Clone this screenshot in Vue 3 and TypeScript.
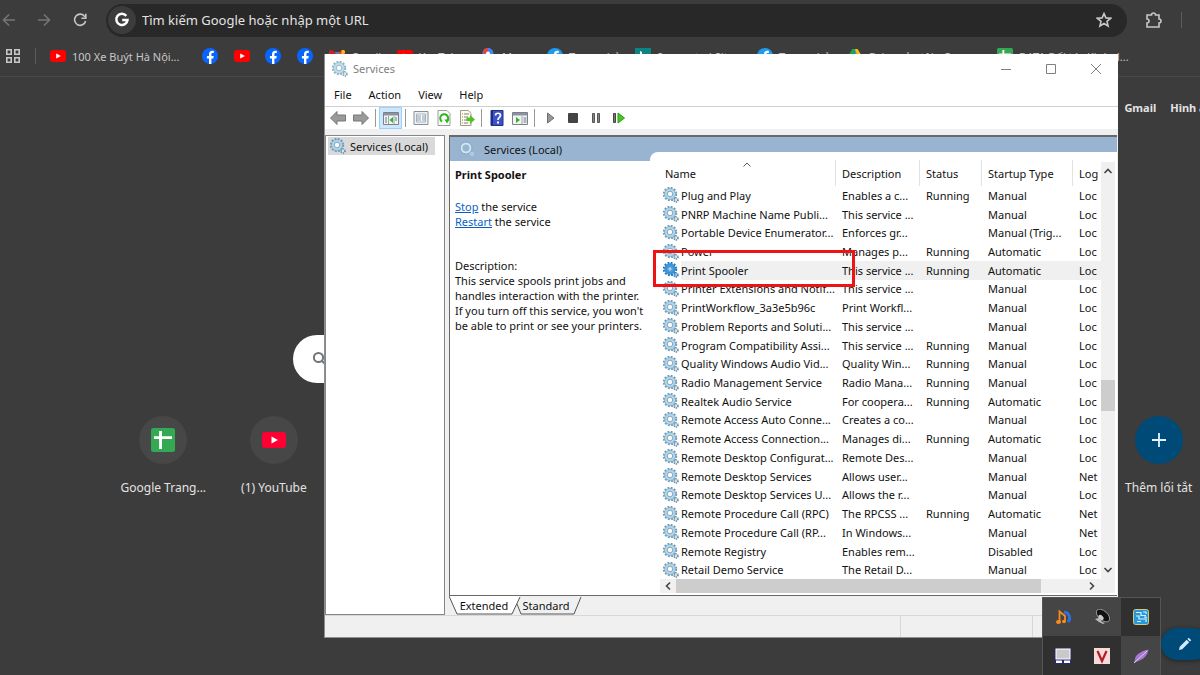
<script setup lang="ts">
interface Service {
  name: string
  desc: string
  status: string
  startup: string
  log: string
}

type Row = [string, string, string, string, string]

const rows: Row[] = [
  ['Plug and Play', 'Enables a c...', 'Running', 'Manual', 'Loc'],
  ['PNRP Machine Name Publi...', 'This service ...', '', 'Manual', 'Loc'],
  ['Portable Device Enumerator...', 'Enforces gr...', '', 'Manual (Trig...', 'Loc'],
  ['Power', 'Manages p...', 'Running', 'Automatic', 'Loc'],
  ['Print Spooler', 'This service ...', 'Running', 'Automatic', 'Loc'],
  ['Printer Extensions and Notif...', 'This service ...', '', 'Manual', 'Loc'],
  ['PrintWorkflow_3a3e5b96c', 'Print Workfl...', '', 'Manual', 'Loc'],
  ['Problem Reports and Soluti...', 'This service ...', '', 'Manual', 'Loc'],
  ['Program Compatibility Assi...', 'This service ...', 'Running', 'Manual', 'Loc'],
  ['Quality Windows Audio Vid...', 'Quality Win...', 'Running', 'Manual', 'Loc'],
  ['Radio Management Service', 'Radio Mana...', 'Running', 'Manual', 'Loc'],
  ['Realtek Audio Service', 'For coopera...', 'Running', 'Automatic', 'Loc'],
  ['Remote Access Auto Conne...', 'Creates a co...', '', 'Manual', 'Loc'],
  ['Remote Access Connection...', 'Manages di...', 'Running', 'Automatic', 'Loc'],
  ['Remote Desktop Configurat...', 'Remote Des...', '', 'Manual', 'Loc'],
  ['Remote Desktop Services', 'Allows user...', '', 'Manual', 'Net'],
  ['Remote Desktop Services U...', 'Allows the r...', '', 'Manual', 'Loc'],
  ['Remote Procedure Call (RPC)', 'The RPCSS ...', 'Running', 'Automatic', 'Net'],
  ['Remote Procedure Call (RP...', 'In Windows...', '', 'Manual', 'Net'],
  ['Remote Registry', 'Enables rem...', '', 'Disabled', 'Loc'],
  ['Retail Demo Service', 'The Retail D...', '', 'Manual', 'Loc'],
]

const services: Service[] = rows.map(([name, desc, status, startup, log]) => ({ name, desc, status, startup, log }))
const selected = 'Print Spooler'
const columns = ['Name', 'Description', 'Status', 'Startup Type', 'Log']
const menus = ['File', 'Action', 'View', 'Help']

interface Bookmark {
  icon: string
  label: string
}

const bookmarks: Bookmark[] = [
  { icon: 'i-yt', label: '100 Xe Buýt Hà Nội...' },
  { icon: 'i-fb', label: '' },
  { icon: 'i-yt', label: '' },
  { icon: 'i-fb', label: '' },
  { icon: 'i-fb', label: '' },
  { icon: 'i-gmail', label: 'Gmail' },
  { icon: 'i-yt', label: 'YouTube' },
  { icon: 'i-maps', label: 'Maps' },
  { icon: 'i-fb2', label: 'Trang chủ' },
  { icon: 'i-bing', label: 'Suggested Sites' },
  { icon: 'i-fb2', label: 'Trang chủ' },
  { icon: 'i-drive', label: 'Drive của tôi - Go...' },
  { icon: 'i-sheet', label: 'DATA Đối tác Kinh d...' },
]
</script>

<template>
  <div class="desktop">
    <svg class="defs" aria-hidden="true">
      <symbol id="i-gear" viewBox="0 0 16 16">
        <circle cx="7" cy="7" r="6" fill="none" stroke="#6f9ab5" stroke-width="2.4" stroke-dasharray="1.8 1.34" />
        <circle cx="7" cy="7" r="4.3" fill="#fff" stroke="#b3d7ea" stroke-width="2.4" />
        <circle cx="7" cy="7" r="5.5" fill="none" stroke="#78a5c0" stroke-width=".7" />
        <circle cx="7" cy="7" r="2.8" fill="#f8fcfe" stroke="#648ca6" stroke-width=".8" />
        <circle cx="13" cy="13" r="2" fill="#d3e5ef" stroke="#5c86a0" stroke-width="1.6" stroke-dasharray="1.1 .9" />
      </symbol>
      <symbol id="i-gear-on" viewBox="0 0 16 16">
        <circle cx="7" cy="7" r="6" fill="none" stroke="#1f6fb0" stroke-width="2.4" stroke-dasharray="1.8 1.34" />
        <circle cx="7" cy="7" r="4.2" fill="#9fcdf0" stroke="#3a94d8" stroke-width="3" />
        <circle cx="7" cy="7" r="2.3" fill="#a9d3f2" stroke="#2a7dc0" stroke-width=".8" />
        <circle cx="13" cy="13" r="2" fill="#8cc0ea" stroke="#2f7fbd" stroke-width="1.6" stroke-dasharray="1.1 .9" />
      </symbol>
      <symbol id="i-yt" viewBox="0 0 16 16">
        <rect x="0" y="2" width="16" height="12" rx="3" fill="#f00" />
        <path d="M6.2 5.4 11 8l-4.800 2.600z" fill="#fff" />
      </symbol>
      <symbol id="i-fb" viewBox="0 0 16 16">
        <circle cx="8" cy="8" r="8" fill="#0866ff" />
        <path d="M7 16v-5.600H4.900V7.900H7V6.300c0-2.300 1.200-3.500 3.300-3.500.6 0 1.100 0 1.500.1v2.200h-1.100c-1 0-1.300.5-1.300 1.400v1.400h2.300l-.4 2.500H9.400V16z" fill="#fff" />
      </symbol>
      <symbol id="i-fb2" viewBox="0 0 16 16">
        <circle cx="8" cy="8" r="8" fill="#1d9bf0" />
        <path d="M7 16v-5.600H4.900V7.900H7V6.300c0-2.300 1.200-3.500 3.300-3.500.6 0 1.100 0 1.500.1v2.200h-1.100c-1 0-1.300.5-1.300 1.400v1.400h2.300l-.4 2.500H9.400V16z" fill="#fff" />
      </symbol>
      <symbol id="i-gmail" viewBox="0 0 16 16">
        <path d="M0 4v10h3.500V7.500L8 11l4.500-3.500V14H16V4z" fill="#4285f4" />
        <path d="M0 4c0-2 2-2.500 3.500-1.500L8 6v5L0 5z" fill="#c5221f" />
        <path d="M16 4c0-2-2-2.500-3.500-1.500L8 6v5l8-6z" fill="#ea4335" />
        <path d="M12.500 2.500C14 1.500 16 2 16 4v1l-3.500 2.600z" fill="#fbbc04" />
      </symbol>
      <symbol id="i-maps" viewBox="0 0 16 16">
        <path d="M8 0C4.500 0 2.500 2.700 2.500 5.500 2.500 10 7 11 8 16c1-5 5.500-6 5.500-10.500C13.500 2.700 11.500 0 8 0z" fill="#4285f4" />
        <path d="M8 0C5 0 3 2 2.600 4.500L6 6l2-3z" fill="#ea4335" />
        <circle cx="8" cy="5.500" r="2" fill="#fff" />
      </symbol>
      <symbol id="i-bing" viewBox="0 0 16 16">
        <rect width="16" height="16" fill="#0c8484" />
        <path d="M5 3l2 1v6l3-1.500L8 7.500 7.500 6 12 8v2l-5 3-2-1z" fill="#fff" />
      </symbol>
      <symbol id="i-drive" viewBox="0 0 16 16">
        <path d="M5.500 1h5L16 10l-2.500 4h-11L0 10z" fill="#4285f4" />
        <path d="M5.500 1H8v5L2.500 14 0 10z" fill="#1ea446" />
        <path d="M8 1h2.500L16 10h-5z" fill="#fbbc04" />
      </symbol>
      <symbol id="i-sheet" viewBox="0 0 16 16">
        <rect width="16" height="16" rx="1.500" fill="#34a853" />
        <path d="M5.400 2h1.900v3.500H14v1.900H7.300V14H5.400V7.400H2V5.500h3.400z" fill="#fff" />
      </symbol>
    </svg>

    <header class="chrome">
      <div class="nav">
        <button class="icon-btn dim" aria-label="Back">
          <svg viewBox="0 0 16 16"><path d="M14 8H3M8 2.500 2.500 8 8 13.500" /></svg>
        </button>
        <button class="icon-btn dim" aria-label="Forward">
          <svg viewBox="0 0 16 16"><path d="M2 8h11M8 2.500 13.500 8 8 13.500" /></svg>
        </button>
        <button class="icon-btn" aria-label="Reload">
          <svg viewBox="0 0 16 16"><path d="M12.800 4.600A5.600 5.600 0 1 0 13.600 9M13.800 1.800v4.400H9.400" /></svg>
        </button>
        <div class="omnibox">
          <span class="g-badge">
            <svg viewBox="0 0 16 16"><path d="M12.300 3.900A5.600 5.600 0 1 0 13.500 8H8.200" fill="none" stroke="#fff" stroke-width="2.500" /></svg>
          </span>
          <input type="text" aria-label="Địa chỉ" placeholder="Tìm kiếm Google hoặc nhập một URL" />
          <button class="icon-btn star" aria-label="Bookmark">
            <svg viewBox="0 0 16 16"><path d="M8 1.600l1.900 4.300 4.700.4-3.600 3.100 1.100 4.600L8 11.500 3.900 14 5 9.400 1.400 6.300l4.700-.4z" /></svg>
          </button>
        </div>
        <button class="icon-btn ext" aria-label="Extensions">
          <svg viewBox="0 0 18 18"><path d="M2 4h4.500a2 2 0 0 1 4 0H14v4a2 2 0 0 1 0 4v4H2v-4a2 2 0 0 0 0-4z" /></svg>
        </button>
        <span class="sep"></span>
      </div>
      <nav class="bookmarks">
        <button class="icon-btn apps" aria-label="Apps">
          <svg viewBox="0 0 16 16"><path d="M1.800 1.800h4.400v4.400H1.800zM9.800 1.800h4.400v4.400H9.800zM1.800 9.800h4.400v4.400H1.800zM9.800 9.800h4.400v4.400H9.800z" /></svg>
        </button>
        <span class="sep"></span>
        <div class="marks">
          <a v-for="(b, i) in bookmarks" :key="i" href="#" :aria-label="b.label || 'Bookmark'">
            <svg><use :href="'#' + b.icon" /></svg>
            <span v-if="b.label">{{ b.label }}</span>
          </a>
        </div>
      </nav>
    </header>

    <main class="page">
      <nav class="top-links"><a href="#">Gmail</a><a href="#">Hình ảnh</a></nav>
      <div class="search">
        <svg viewBox="0 0 16 16"><circle cx="6.500" cy="6.500" r="4.600" /><path d="M10 10l4.500 4.500" /></svg>
      </div>
      <div class="shortcuts">
        <a href="#"><span class="disc"><svg><use href="#i-sheet" /></svg></span>Google Trang...</a>
        <a href="#"><span class="disc"><svg class="yt" viewBox="0 0 24 16"><rect width="24" height="16" rx="3" fill="#ff0033" /><path d="M9.500 4.500 16 8l-6.500 3.500z" fill="#fff" /></svg></span>(1) YouTube</a>
        <a href="#" class="add"><span class="disc"><svg viewBox="0 0 16 16"><path d="M8 1v14M1 8h14" stroke="#e3f2ff" stroke-width="1.800" /></svg></span>Thêm lối tắt</a>
      </div>
      <button class="edit" aria-label="Customize">
        <svg viewBox="0 0 16 16"><path d="M2 14l.7-3.200 7-7 2.500 2.500-7 7zM10.500 3l1.200-1.200 2.500 2.500L13 5.500z" fill="#d3ebff" /></svg>
      </button>
    </main>

    <section class="window">
      <header class="title">
        <svg class="g16"><use href="#i-gear" /></svg>
        <span>Services</span>
        <div class="caption">
          <button aria-label="Minimize"><svg viewBox="0 0 12 12"><path d="M1 6.500h10" /></svg></button>
          <button aria-label="Maximize"><svg viewBox="0 0 12 12"><path d="M1.500 1.500h9v9h-9z" /></svg></button>
          <button aria-label="Close"><svg viewBox="0 0 12 12"><path d="M1 1l10 10M11 1 1 11" /></svg></button>
        </div>
      </header>
      <nav class="menu"><button v-for="m in menus" :key="m">{{ m }}</button></nav>
      <div class="tools">
        <button aria-label="Back"><svg viewBox="0 0 16 16"><path d="M.5 8 7 1.500V5h8.500v6H7v3.500z" fill="#9a9a9a" stroke="#777" /></svg></button>
        <button aria-label="Forward"><svg viewBox="0 0 16 16"><path d="M15.500 8 9 1.500V5H.5v6H9v3.500z" fill="#9a9a9a" stroke="#777" /></svg></button>
        <i></i>
        <button class="on" aria-label="Show tree">
          <svg viewBox="0 0 16 16"><path d="M.5 2.500h15v12H.5z" fill="#f4f4f4" stroke="#7b8089" /><path d="M1 3h14v2.500H1z" fill="#8a93a3" /><path d="M5.500 6v8M11 6v8" stroke="#9aa" /><path d="M10 7v6L6.500 10z" fill="#35b224" /><path d="M2 8h2M2 10h2M2 12h2M12 8h2M12 10h2" stroke="#678" /></svg>
        </button>
        <i></i>
        <button aria-label="Properties">
          <svg viewBox="0 0 16 16"><path d="M1 1.500h14v13H1z" fill="#eef1f4" stroke="#888f96" /><path d="M3.500 4h9v8h-9z" fill="#fff" stroke="#a6b3bf" /><path d="M4 6h4M9 6h3M4 8h4M9 8h3M4 10h4M9 10h3" stroke="#8299ad" /></svg>
        </button>
        <button aria-label="Refresh">
          <svg viewBox="0 0 16 16"><path d="M2 .5h9l3 3v12H2z" fill="#fafcfa" stroke="#9a9f9a" /><path d="M6 11.500A4 4 0 1 1 11 11" fill="none" stroke="#2eb31d" stroke-width="2" /><path d="M8.500 9.500h5l-2.500 4z" fill="#2eb31d" /></svg>
        </button>
        <button aria-label="Export list">
          <svg viewBox="0 0 16 16"><path d="M1.500.5h8l2.500 3v12H1.500z" fill="#fffbea" stroke="#a09c88" /><path d="M3 4h1M5 4h5M3 7h1M5 7h4M3 10h1M5 10h4M3 13h1M5 13h4" stroke="#77808a" /><path d="M7.500 7.500H11V5l5 4.500-5 4.500v-3H7.500z" fill="#4fc326" /></svg>
        </button>
        <i></i>
        <button aria-label="Help">
          <svg viewBox="0 0 16 16"><path d="M2 .5h12v15H2z" fill="#3b52c8" stroke="#22307e" /><path d="M2 1h2v14H2z" fill="#1f2d80" /><path d="M6.500 5.500C6.500 2.500 11.500 2.500 11.500 5.500 11.500 7.500 9 7.500 9 10" fill="none" stroke="#fff" stroke-width="1.700" /><path d="M8 11.500h2v2H8z" fill="#fff" /></svg>
        </button>
        <button aria-label="Show pane">
          <svg viewBox="0 0 16 16"><path d="M.5 2.500h15v12H.5z" fill="#f4f4f4" stroke="#7b8089" /><path d="M1 3h14v2.500H1z" fill="#8a93a3" /><path d="M10 6v8" stroke="#9aa" /><path d="M4 7v6l4-3z" fill="#35b224" /><path d="M11.500 8h3M11.500 10h3M11.500 12h3" stroke="#678" /></svg>
        </button>
        <i></i>
        <button aria-label="Start service"><svg viewBox="0 0 16 16"><path d="M5.500 3v10l6.500-5z" fill="#989898" stroke="#6f6f6f" /></svg></button>
        <button aria-label="Stop service"><svg viewBox="0 0 16 16"><rect x="3" y="3" width="10" height="10" rx="1" fill="#444" /></svg></button>
        <button aria-label="Pause service"><svg viewBox="0 0 16 16"><path d="M4.500 3.500h2v9h-2zM9.500 3.500h2v9h-2z" fill="#888" stroke="#555" /></svg></button>
        <button aria-label="Restart service"><svg viewBox="0 0 16 16"><path d="M2.500 3.500h2v9h-2z" fill="#777" stroke="#444" /><path d="M7 3v10l6.500-5z" fill="#4fc326" stroke="#23a010" /></svg></button>
      </div>

      <div class="body">
        <aside class="tree">
          <a href="#" class="node"><svg class="g16"><use href="#i-gear" /></svg><span>Services (Local)</span></a>
        </aside>
        <div class="content">
          <div class="panes">
            <h1><svg viewBox="0 0 16 16"><circle cx="7" cy="7" r="4.500" fill="none" stroke="#cfe6f2" stroke-width="2" /><circle cx="7" cy="7" r="6" fill="none" stroke="#7fa5c6" stroke-dasharray="2 1" /><circle cx="13" cy="13" r="1.500" fill="none" stroke="#c4dbe9" /></svg>Services (Local)</h1>
            <div class="split">
              <div class="info">
                <h2>Print Spooler</h2>
                <p><a href="#">Stop</a> the service<br /><a href="#">Restart</a> the service</p>
                <p class="about">Description:<br />This service spools print jobs and<br />handles interaction with the printer.<br />If you turn off this service, you won't<br />be able to print or see your printers.</p>
              </div>
              <div class="list">
                <table>
                  <thead>
                    <tr>
                      <th v-for="c in columns" :key="c" scope="col">
                        {{ c }}
                        <svg v-if="c === 'Name'" class="sort" viewBox="0 0 8 5"><path d="M.5 4.500 4 1l3.500 3.500" /></svg>
                      </th>
                    </tr>
                  </thead>
                  <tbody>
                    <tr v-for="s in services" :key="s.name + s.desc" :class="{ sel: s.name === selected }">
                      <td class="name">
                        <svg class="g16"><use :href="s.name === selected ? '#i-gear-on' : '#i-gear'" /></svg>
                        <span>{{ s.name }}</span>
                      </td>
                      <td>{{ s.desc }}</td>
                      <td>{{ s.status }}</td>
                      <td>{{ s.startup }}</td>
                      <td>{{ s.log }}</td>
                    </tr>
                  </tbody>
                </table>
                <div class="vbar">
                  <button aria-label="Scroll up"><svg viewBox="0 0 10 10"><path d="M1.500 7 5 3.500 8.500 7" /></svg></button>
                  <div class="track"><span></span></div>
                  <button aria-label="Scroll down"><svg viewBox="0 0 10 10"><path d="M1.500 3 5 6.500 8.500 3" /></svg></button>
                </div>
                <div class="hbar">
                  <button aria-label="Scroll left"><svg viewBox="0 0 10 10"><path d="M7 1.500 3.500 5 7 8.500" /></svg></button>
                  <div class="track"><span></span></div>
                  <button aria-label="Scroll right"><svg viewBox="0 0 10 10"><path d="M3 1.500 6.500 5 3 8.500" /></svg></button>
                </div>
                <div class="corner"></div>
                <div class="highlight"></div>
              </div>
            </div>
          </div>
          <div class="tabs">
            <svg class="shape" viewBox="0 0 140 20"><path d="M0 0 8 18H63L71 0z" fill="#fff" /><path d="M0 0 8 18H63L71 1M68 8l4 10h53l7-17" fill="none" stroke="#555" /></svg>
            <button>Extended</button>
            <button>Standard</button>
          </div>
        </div>
      </div>
      <footer class="status"><span></span><span></span><span></span></footer>
    </section>

    <div class="tray">
      <button aria-label="Music"><svg viewBox="0 0 16 16"><path d="M9 3a6 6 0 0 1 4 10" fill="none" stroke="#2f6fe0" stroke-width="3" /><path d="M4.500 13V2.500L10 7v5" fill="none" stroke="#f58a1f" stroke-width="1.800" /><ellipse cx="3.500" cy="13" rx="2.500" ry="2" fill="#ff8a1c" /><ellipse cx="9" cy="12.500" rx="2" ry="1.700" fill="#ff8a1c" /></svg></button>
      <button aria-label="Speaker"><svg viewBox="0 0 16 16"><ellipse cx="9" cy="6.500" rx="8" ry="4.500" transform="rotate(42 9 6.500)" fill="#111" stroke="#b8b8b8" stroke-width=".7" /><ellipse cx="7" cy="8.500" rx="3" ry="2" transform="rotate(42 7 8.500)" fill="#ccc" /><path d="M1 10l4-1 3 4 3 1-2 1-4-2z" fill="#bdbdbd" /></svg></button>
      <button class="dark" aria-label="Graphics"><svg viewBox="0 0 16 16"><rect x=".5" y=".5" width="15" height="15" rx="2" fill="#2897d8" stroke="#d8c47a" /><path d="M3 3.500h5v3h5M3 7h3v3h6M4 12.500h4M10 3h3v2M11 8h2v5" fill="none" stroke="#d6f2ff" stroke-width="1.200" /></svg></button>
      <button class="dark" aria-label="Display"><svg viewBox="0 0 16 16"><path d="M0 0h16v16H0z" fill="#29297c" /><rect x="1" y="1" width="14" height="10" fill="#c9c9c9" stroke="#fff" /><path d="M1 12.500h6v2.500H1zM9 12.500h6v2.500H9z" fill="#fff" /></svg></button>
      <button class="dark" aria-label="Vietnamese input"><svg viewBox="0 0 16 16"><rect width="16" height="16" fill="#f8dada" /><path d="M3.500 3l4.500 10L12.500 3" fill="none" stroke="#b01e28" stroke-width="2.200" /></svg></button>
      <button aria-label="Feather"><svg viewBox="0 0 16 16"><path d="M1 15 2.500 9C5 5 10 2.500 15.500 1.500 14.500 7 11 11.500 5 13z" fill="#a678cf" /><path d="M1 15 14 3" stroke="#e0c8f5" /></svg></button>
    </div>
  </div>
</template>

<style>
html,
body,
#app {
  height: 100%;
}
body {
  margin: 0;
  overflow: hidden;
  background: #3c3c3c;
}
</style>

<style scoped>
.desktop {
  position: relative;
  display: flex;
  flex-direction: column;
  height: 100%;
  overflow: hidden;
  background: #3c3c3c;
  color: #e3e3e3;
  font: 12px/15px "Noto Sans", "Open Sans", sans-serif;
}
.desktop *,
.desktop *::before {
  box-sizing: border-box;
}
.defs {
  position: absolute;
  width: 0;
  height: 0;
}
button {
  display: flex;
  align-items: center;
  justify-content: center;
  padding: 0;
  border: 0;
  background: none;
  color: inherit;
  font: inherit;
}
a {
  color: inherit;
  text-decoration: none;
}
svg {
  flex: none;
}
.g16 {
  width: 16px;
  height: 16px;
}

/* browser */
.chrome {
  border-bottom: 1px solid #484848;
}
.nav {
  display: flex;
  align-items: center;
  height: 40px;
  padding-right: 18px;
}
.icon-btn {
  width: 35px;
}
.icon-btn svg {
  width: 16px;
  height: 16px;
  fill: none;
  stroke: #c7c7c7;
  stroke-width: 1.6;
}
.icon-btn.dim svg {
  stroke: #757575;
}
.nav > .icon-btn:nth-child(1) {
  width: 18px;
}
.nav > .icon-btn:nth-child(2) {
  width: 52px;
}
.nav > .icon-btn:nth-child(3) {
  width: 20px;
}
.omnibox {
  display: flex;
  flex: 1;
  align-items: center;
  height: 33px;
  margin-left: 16px;
  padding: 0 6px 0 2px;
  border-radius: 17px;
  background: #282828;
}
.g-badge {
  display: flex;
  align-items: center;
  justify-content: center;
  width: 28px;
  height: 28px;
  border-radius: 50%;
  background: #3c3c3c;
}
.g-badge svg {
  width: 16px;
  height: 16px;
}
.omnibox input {
  flex: 1;
  min-width: 0;
  padding: 0 6px;
  border: 0;
  outline: 0;
  background: none;
  color: #e3e3e3;
  font: 13px/20px "Noto Sans", sans-serif;
}
.omnibox input::placeholder {
  color: #e3e3e3;
  opacity: 1;
}
.nav > .ext {
  width: 54px;
}
.ext svg {
  width: 18px;
  height: 18px;
}
.sep {
  width: 1px;
  height: 16px;
  background: #5c5c5c;
}
.bookmarks {
  display: flex;
  align-items: center;
  height: 36px;
  padding-bottom: 4px;
  color: #c7c7c7;
  font-size: 11px;
}
.apps {
  width: 25px;
}
.bookmarks .sep {
  margin: 0 14px 0 10px;
}
.marks {
  display: grid;
  flex: 1;
  grid-template-columns: 152px 32px 31px 32px 32px 68px 83px 67px 88px 122px 90px 150px 1fr;
}
.marks a {
  display: flex;
  align-items: center;
  gap: 6px;
  white-space: nowrap;
}
.marks svg {
  width: 16px;
  height: 16px;
}
.page {
  display: flex;
  flex: 1;
  flex-direction: column;
}
.top-links {
  display: flex;
  gap: 14px;
  margin: 23px -20px 0 0;
  justify-content: flex-end;
  font-size: 11px;
  font-weight: bold;
}
.search {
  display: flex;
  align-items: center;
  width: 60%;
  height: 48px;
  margin: 220px 0 0 293px;
  padding-left: 19px;
  border-radius: 24px;
  background: #fff;
}
.search svg {
  width: 16px;
  height: 16px;
  fill: none;
  stroke: #70757a;
  stroke-width: 2;
}
.shortcuts {
  display: grid;
  grid-template-columns: repeat(10, 1fr);
  margin: 33px -14px 0 108px;
}
.shortcuts a {
  display: flex;
  flex-direction: column;
  align-items: center;
  gap: 16px;
  white-space: nowrap;
}
.shortcuts .add {
  grid-column: 10;
}
.disc {
  display: flex;
  align-items: center;
  justify-content: center;
  width: 48px;
  height: 48px;
  border-radius: 50%;
  background: #464746;
}
.disc svg {
  width: 24px;
  height: 24px;
}
.disc .yt {
  height: 16px;
}
.add .disc {
  background: #004a77;
}
.add .disc svg {
  width: 16px;
  height: 16px;
}
.edit {
  align-self: flex-end;
  width: 48px;
  height: 32px;
  margin: auto -9px 15px 0;
  border-radius: 16px;
  background: #004a77;
  box-shadow: 0 1px 4px #222;
}
.edit svg {
  width: 16px;
  height: 16px;
}

/* services window */
.window {
  position: absolute;
  top: 54px;
  right: 82px;
  bottom: 37px;
  left: 324px;
  display: flex;
  flex-direction: column;
  border: solid #8f8f8f;
  border-width: 0 0 1px 1px;
  background: #f0f0f0;
  color: #111;
  font-size: 11px;
}
.title {
  display: flex;
  align-items: center;
  gap: 5px;
  height: 29px;
  padding-left: 7px;
  background: #fff;
  color: #808080;
}
.title .g16 {
  opacity: 0.8;
}
.caption {
  display: flex;
  margin-left: auto;
}
.caption button {
  width: 45px;
}
.caption svg {
  width: 12px;
  height: 12px;
  fill: none;
  stroke: #808080;
}
.menu {
  display: flex;
  gap: 17px;
  height: 24px;
  padding-left: 9px;
  border-bottom: 1px solid #d0d0d0;
  background: #fff;
}
.tools {
  display: flex;
  align-items: center;
  height: 22px;
  padding-left: 1px;
  background: #fff;
}
.tools button {
  width: 23px;
  height: 22px;
}
.tools .on {
  border: 1px solid #99d1ff;
  background: #cce8ff;
}
.tools svg {
  width: 16px;
  height: 16px;
}
.tools i {
  width: 1px;
  height: 18px;
  margin: 0 3px;
  background: #999;
}
.body {
  display: flex;
  flex: 1;
  gap: 4px;
  min-height: 0;
  padding: 6px 1px 0 0;
}
.tree {
  width: 120px;
  padding: 1px 2px;
  border: 1px solid #828790;
  background: #fff;
}
.node {
  display: flex;
  align-items: center;
  gap: 4px;
  width: 107px;
  height: 18px;
  padding-left: 2px;
  background: #d9d9d9;
  white-space: nowrap;
}
.content {
  display: flex;
  flex: 1;
  flex-direction: column;
  min-width: 0;
}
.panes {
  display: flex;
  flex: 1;
  flex-direction: column;
  min-height: 0;
  border: solid #696969;
  border-width: 2px 0 1px 1px;
  background: #fff;
}
h1 {
  display: flex;
  align-items: center;
  gap: 9px;
  height: 24px;
  margin: 0;
  padding-left: 9px;
  background: #99b4d1;
  font: inherit;
}
h1 svg {
  width: 16px;
  height: 16px;
}
.split {
  display: flex;
  flex: 1;
  min-height: 0;
}
.info {
  width: 200px;
  padding: 6px 0 0 5px;
  white-space: nowrap;
}
h2 {
  margin: 0;
  font: bold 11px/15px "Noto Sans", sans-serif;
}
p {
  margin: 17px 0 0;
}
.about {
  margin-top: 29px;
}
p a {
  color: #0b5fc4;
  text-decoration: underline;
}
.list {
  position: relative;
  display: grid;
  flex: 1;
  grid-template-rows: 1fr 14px;
  grid-template-columns: 1fr 14px;
  min-width: 0;
  margin-top: -9px;
  padding: 8px 2px 2px 10px;
  border-top-left-radius: 8px;
  background: #fff;
}
table {
  display: flex;
  flex-direction: column;
  min-width: 0;
  min-height: 0;
}
thead,
tbody {
  display: flex;
  flex-direction: column;
}
tbody {
  flex: 1;
  min-height: 0;
}
tr {
  display: grid;
  flex: 1;
  grid-template-columns: 1fr 84px 62px 91px 28px;
  min-height: 0;
  white-space: nowrap;
}
th {
  position: relative;
  height: 26px;
  padding: 6px 0 0 6px;
  border-right: 1px solid #e2e2e2;
  font-weight: normal;
  text-align: left;
}
th:first-child {
  padding-left: 5px;
}
th:last-child {
  border: 0;
}
.sort {
  position: absolute;
  top: 2px;
  right: 84px;
  width: 8px;
  height: 5px;
  fill: none;
  stroke: #555;
}
td {
  display: flex;
  align-items: center;
  padding: 0 0 0 6px;
  overflow: hidden;
}
td.name {
  gap: 2px;
  padding-left: 3px;
}
td.name span {
  display: flex;
  flex: 1;
  align-items: center;
}
.sel td:not(.name),
.sel .name span {
  background: #f0f0f0;
  align-self: stretch;
}
.vbar,
.hbar {
  display: flex;
  background: #f0f0f0;
}
.corner {
  background: #f0f0f0;
}
.vbar {
  flex-direction: column;
  margin-top: 2px;
}
.vbar button {
  height: 18px;
}
.hbar button {
  width: 16px;
}
.hbar button:last-child {
  width: 19px;
}
.vbar svg,
.hbar svg {
  width: 10px;
  height: 10px;
  fill: none;
  stroke: #444;
  stroke-width: 1.6;
}
.track {
  display: flex;
  flex: 1;
}
.vbar .track {
  flex-direction: column;
  padding-top: 200px;
}
.vbar .track span {
  height: 31px;
  background: #cdcdcd;
}
.hbar .track span {
  width: 90%;
  background: #cdcdcd;
}
.highlight {
  position: absolute;
  top: 98px;
  left: 3px;
  width: 202px;
  height: 37px;
  border: 3px solid #ee1414;
}
.tabs {
  position: relative;
  display: flex;
  gap: 6px;
  height: 19px;
  padding: 0 0 0 7px;
}
.tabs button {
  position: relative;
  width: 56px;
}
.shape {
  position: absolute;
  top: 0;
  left: 0;
  width: 140px;
  height: 20px;
}
.status {
  display: flex;
  height: 22px;
  border-top: 1px solid #d7d7d7;
}
.status span {
  width: 132px;
  border-left: 1px solid #d7d7d7;
}
.status span:first-child {
  flex: 1;
  border: 0;
}
.status span:last-child {
  width: 86px;
}

.tray {
  position: absolute;
  right: 39px;
  bottom: 0;
  display: grid;
  grid-template-columns: repeat(3, 39px);
  grid-template-rows: 38px 39px;
  border: 1px solid #555;
  border-bottom: 0;
  background: #454545;
}
.tray .dark {
  background: #303030;
}
.tray svg {
  width: 16px;
  height: 16px;
}
</style>
